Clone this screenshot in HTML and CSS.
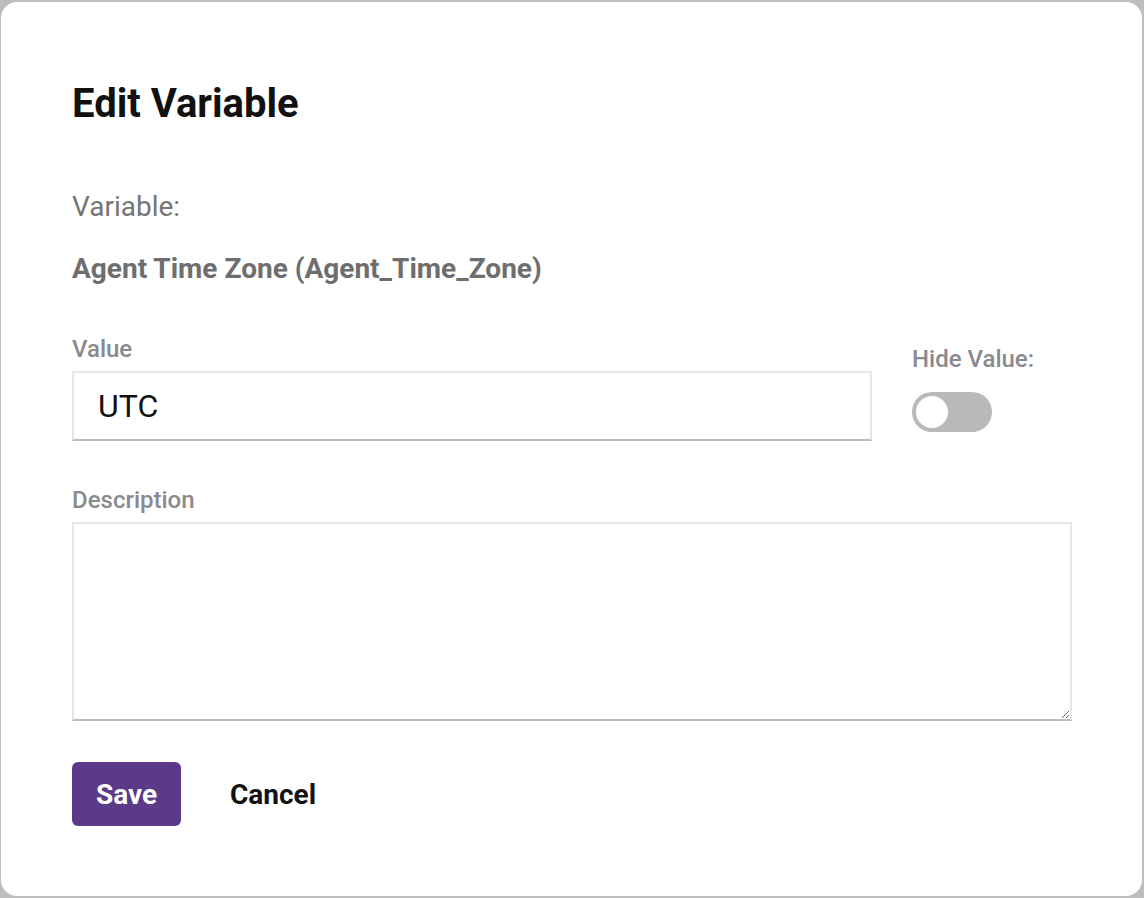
FILE: index.html
```html
<!DOCTYPE html>
<html lang="en">
<head>
  <meta charset="UTF-8">
  <title>Edit Variable</title>
  <link rel="stylesheet" href="styles.css">
</head>
<body>
  <div class="dialog">
    <h1>Edit Variable</h1>

    <div class="var-label">Variable:</div>
    <div class="var-name">Agent Time Zone (Agent_Time_Zone)</div>

    <!-- value + hide toggle -->
    <div class="value-row">
      <div class="value-field">
        <label class="field-label" for="value">Value</label>
        <input type="text" id="value" class="text-input" value="UTC">
      </div>
      <div class="hide-field">
        <div class="field-label">Hide Value:</div>
        <div class="toggle"><span class="knob"></span></div>
      </div>
    </div>

    <label class="field-label desc-label" for="desc">Description</label>
    <textarea id="desc" class="text-area"></textarea>

    <div class="actions">
      <button class="btn-save">Save</button>
      <button class="btn-cancel">Cancel</button>
    </div>
  </div>
</body>
</html>
```

FILE: styles.css
```css
html, body {
  height: 100%;
}

body {
  margin: 0;
  padding: 2px 2px 2px 1px;
  box-sizing: border-box;
  background-color: #bdbdbd;
  font-family: Roboto, "Liberation Sans", sans-serif;
}

.dialog {
  height: 100%;
  box-sizing: border-box;
  background: white;
  border-radius: 16px;
  padding: 78px 71px 0 71px;
}

h1 {
  margin: 0;
  font-size: 40px;
  font-weight: 700;
  color: #111;
  line-height: 48px;
}

.var-label {
  margin-top: 62px;
  font-size: 28px;
  color: #757575;
  line-height: 34px;
}

.var-name {
  margin-top: 28px;
  font-size: 28px;
  font-weight: 700;
  color: #6e6e6e;
  line-height: 34px;
}

.value-row {
  display: flex;
  gap: 40px;
  margin-top: 49px;
}

.value-field {
  width: 800px;
}

.field-label {
  display: block;
  font-size: 24px;
  font-weight: 500;
  color: #8a8a8e;
  line-height: 28px;
  margin-bottom: 8px;
}

.text-input {
  display: block;
  width: 100%;
  height: 70px;
  box-sizing: border-box;
  padding: 0 24px;
  border: 2px solid #e6e6e6;
  border-bottom-color: #bdbdbd;
  font-family: Roboto, "Liberation Sans", sans-serif;
  font-size: 32px;
  color: #111;
  outline: none;
}

.hide-field {
  padding-top: 10px;
}

.hide-field .field-label {
  margin-bottom: 19px;
}

.toggle {
  width: 80px;
  height: 40px;
  border-radius: 20px;
  background: #b9b9bb;
  position: relative;
}

.knob {
  position: absolute;
  left: 4px;
  top: 4px;
  width: 32px;
  height: 32px;
  border-radius: 50%;
  background: white;
}

.desc-label {
  margin-top: 45px;
}

.text-area {
  display: block;
  width: 1000px;
  height: 199px;
  box-sizing: border-box;
  border: 2px solid #e6e6e6;
  border-bottom-color: #bdbdbd;
  resize: vertical;
  font-family: Roboto, "Liberation Sans", sans-serif;
  font-size: 24px;
  outline: none;
}

.actions {
  display: flex;
  align-items: center;
  gap: 24px;
  margin-top: 41px;
}

button {
  border: none;
  cursor: pointer;
  font-family: Roboto, "Liberation Sans", sans-serif;
  font-size: 28px;
  font-weight: 700;
}

.btn-save {
  width: 109px;
  height: 64px;
  border-radius: 6px;
  background-color: #5c3a8a;
  color: white;
}

.btn-cancel {
  background: none;
  color: #111;
  padding: 0 25px;
}
```
